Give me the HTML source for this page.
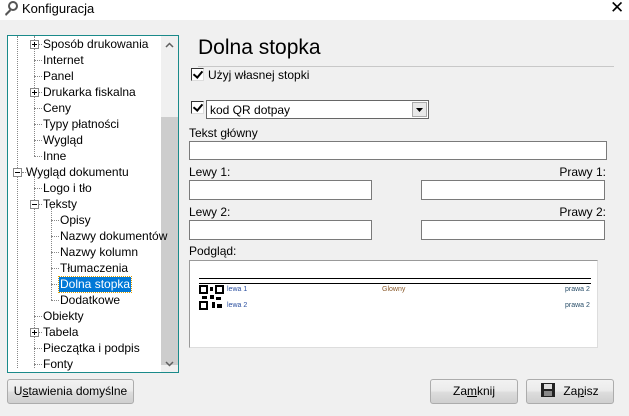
<!DOCTYPE html><html><head><style>
*{margin:0;padding:0;box-sizing:border-box}
body{width:629px;height:416px;background:#f0f0f0;font-family:"Liberation Sans",sans-serif;font-size:12px;color:#000;position:relative;overflow:hidden}
.a{position:absolute;white-space:nowrap}
.inp{position:absolute;background:#fff;border:1px solid #7a7a7a}
.cb{position:absolute;width:13px;height:13px;background:#fff;border:1px solid #333;border-right-color:#ddd;border-bottom-color:#ddd}
.cb:after{content:"";position:absolute;left:3px;top:0px;width:4px;height:7px;border:solid #000;border-width:0 2px 2px 0;transform:rotate(40deg)}
.pm{position:absolute;width:9px;height:9px;border:1px solid #888;background:#fff}
.pm:before{content:"";position:absolute;left:1px;top:3px;width:5px;height:1px;background:#000}
.pm.p:after{content:"";position:absolute;left:3px;top:1px;width:1px;height:5px;background:#000}
.btn{position:absolute;height:25px;border:1px solid #acacac;border-radius:3px;background:linear-gradient(#f2f2f2,#ebebeb 45%,#dcdcdc 55%,#cfcfcf);text-align:center;line-height:23px}
.dv{position:absolute;border-left:1px dotted #888}
.dh{position:absolute;border-top:1px dotted #888;height:0}
</style></head><body>
<div class="a" style="left:0;top:0;width:629px;height:20px;background:#fff"></div>
<svg class="a" style="left:3px;top:1px" width="16" height="16" viewBox="0 0 16 16"><circle cx="10" cy="5" r="4" fill="none" stroke="#555" stroke-width="2"/><path d="M7 8 L2 13 L3 15 L8 10" fill="#555"/></svg>
<div class="a" style="left:22px;top:1px;font-size:13px">Konfiguracja</div>
<div class="a" style="left:610px;top:-2px;font-size:17px">✕</div>

<div class="a" style="left:7px;top:35px;width:172px;height:338px;background:#fff;border:1px solid #1a8a8a"></div>
<div class="a" style="left:161px;top:36px;width:17px;height:336px;background:#f0f0f0"></div>
<div class="a" style="left:161px;top:117px;width:17px;height:248px;background:#cdcdcd"></div>
<svg class="a" style="left:165px;top:42px" width="9" height="6"><path d="M1 5 L4.5 1.5 L8 5" fill="none" stroke="#606060" stroke-width="1.5"/></svg>
<svg class="a" style="left:165px;top:361px" width="9" height="6"><path d="M1 1 L4.5 4.5 L8 1" fill="none" stroke="#606060" stroke-width="1.5"/></svg>

<div class="dv" style="left:17px;top:36px;height:136px"></div>
<div class="dv" style="left:34px;top:36px;height:120px"></div>
<div class="dv" style="left:17px;top:176px;height:192px"></div>
<div class="dv" style="left:34px;top:176px;height:192px"></div>
<div class="dv" style="left:51px;top:208px;height:92px"></div>
<div class="dh" style="left:34px;top:60px;width:8px"></div><div class="dh" style="left:34px;top:76px;width:8px"></div>
<div class="dh" style="left:34px;top:108px;width:8px"></div><div class="dh" style="left:34px;top:124px;width:8px"></div>
<div class="dh" style="left:34px;top:140px;width:8px"></div><div class="dh" style="left:34px;top:156px;width:8px"></div>
<div class="dh" style="left:34px;top:188px;width:8px"></div><div class="dh" style="left:34px;top:316px;width:8px"></div>
<div class="dh" style="left:34px;top:348px;width:8px"></div><div class="dh" style="left:34px;top:364px;width:8px"></div>
<div class="dh" style="left:22px;top:172px;width:4px"></div><div class="dh" style="left:39px;top:44px;width:3px"></div>
<div class="dh" style="left:39px;top:92px;width:3px"></div><div class="dh" style="left:39px;top:204px;width:3px"></div>
<div class="dh" style="left:39px;top:332px;width:3px"></div>
<div class="dh" style="left:51px;top:220px;width:8px"></div><div class="dh" style="left:51px;top:236px;width:8px"></div>
<div class="dh" style="left:51px;top:252px;width:8px"></div><div class="dh" style="left:51px;top:268px;width:8px"></div>
<div class="dh" style="left:51px;top:284px;width:8px"></div><div class="dh" style="left:51px;top:300px;width:8px"></div>
<div class="pm p" style="left:30px;top:40px"></div><div class="pm p" style="left:30px;top:88px"></div>
<div class="pm" style="left:13px;top:168px"></div><div class="pm" style="left:30px;top:200px"></div>
<div class="pm p" style="left:30px;top:328px"></div>
<div class="a" style="left:43px;top:37px">Sposób drukowania</div>
<div class="a" style="left:43px;top:53px">Internet</div>
<div class="a" style="left:43px;top:69px">Panel</div>
<div class="a" style="left:43px;top:85px">Drukarka fiskalna</div>
<div class="a" style="left:43px;top:101px">Ceny</div>
<div class="a" style="left:43px;top:117px">Typy płatności</div>
<div class="a" style="left:43px;top:133px">Wygląd</div>
<div class="a" style="left:43px;top:149px">Inne</div>
<div class="a" style="left:26px;top:165px">Wygląd dokumentu</div>
<div class="a" style="left:43px;top:181px">Logo i tło</div>
<div class="a" style="left:43px;top:197px">Teksty</div>
<div class="a" style="left:60px;top:213px">Opisy</div>
<div class="a" style="left:60px;top:229px">Nazwy dokumentów</div>
<div class="a" style="left:60px;top:245px">Nazwy kolumn</div>
<div class="a" style="left:60px;top:261px">Tłumaczenia</div>
<div class="a" style="left:59px;top:277px;background:#0078d7;color:#fff;padding:0 1px;height:15px;outline:1px dotted #e0a000">Dolna stopka</div>
<div class="a" style="left:60px;top:293px">Dodatkowe</div>
<div class="a" style="left:43px;top:309px">Obiekty</div>
<div class="a" style="left:43px;top:325px">Tabela</div>
<div class="a" style="left:43px;top:341px">Pieczątka i podpis</div>
<div class="a" style="left:43px;top:357px">Fonty</div>

<div class="a" style="left:198px;top:36px;font-size:21px">Dolna stopka</div>
<div class="a" style="left:198px;top:66px;width:416px;height:1px;background:#c8c8c8"></div>
<div class="cb" style="left:191px;top:68px"></div>
<div class="a" style="left:208px;top:68px">Użyj własnej stopki</div>
<div class="cb" style="left:191px;top:101px"></div>
<div class="inp" style="left:206px;top:100px;width:223px;height:19px;border-color:#666"><span class="a" style="left:3px;top:2px">kod QR dotpay</span>
<div class="a" style="left:205px;top:1px;width:15px;height:15px;background:#e8e8e8;border:1px solid #aaa"><svg class="a" style="left:3px;top:5px" width="8" height="5"><path d="M0 0 L7 0 L3.5 4 Z" fill="#000"/></svg></div></div>
<div class="a" style="left:189px;top:126px">Tekst główny</div>
<div class="inp" style="left:189px;top:141px;width:418px;height:19px"></div>
<div class="a" style="left:189px;top:165px">Lewy 1:</div>
<div class="a" style="right:23px;top:165px">Prawy 1:</div>
<div class="inp" style="left:189px;top:180px;width:183px;height:20px"></div>
<div class="inp" style="left:421px;top:180px;width:184px;height:20px"></div>
<div class="a" style="left:189px;top:205px">Lewy 2:</div>
<div class="a" style="right:23px;top:205px">Prawy 2:</div>
<div class="inp" style="left:189px;top:220px;width:183px;height:20px"></div>
<div class="inp" style="left:421px;top:220px;width:184px;height:20px"></div>
<div class="a" style="left:189px;top:244px">Podgląd:</div>
<div class="a" style="left:189px;top:260px;width:409px;height:88px;background:#fff;border:1px solid #999;border-right-color:#ddd;border-bottom-color:#ddd"></div>
<div class="a" style="left:199px;top:278px;width:392px;height:1px;background:#000"></div>
<div class="a" style="left:199px;top:283px;width:392px;height:1px;background:#000"></div>
<svg class="a" style="left:199px;top:285px" width="26" height="26" viewBox="0 0 26 26"><g fill="none" stroke="#000" stroke-width="2"><rect x="1" y="1" width="7" height="7"/><rect x="17" y="1" width="7" height="7"/><rect x="1" y="17" width="7" height="7"/></g><g fill="#000"><rect x="11" y="2" width="3" height="4"/><rect x="3" y="11" width="5" height="3"/><rect x="11" y="10" width="4" height="4"/><rect x="17" y="12" width="5" height="3"/><rect x="13" y="17" width="3" height="6"/><rect x="18" y="19" width="5" height="4"/></g></svg>
<div class="a" style="left:227px;top:286px;font-size:7px;color:#2a4fa0">lewa 1</div>
<div class="a" style="left:382px;top:286px;font-size:7px;color:#8a5a2a">Glowny</div>
<div class="a" style="left:565px;top:286px;font-size:7px;color:#2a4f6a">prawa 2</div>
<div class="a" style="left:227px;top:302px;font-size:7px;color:#2a4fa0">lewa 2</div>
<div class="a" style="left:565px;top:302px;font-size:7px;color:#2a4f6a">prawa 2</div>

<div class="btn" style="left:7px;top:379px;width:127px">U<u>s</u>tawienia domyślne</div>
<div class="btn" style="left:430px;top:379px;width:88px">Za<u>m</u>knij</div>
<div class="btn" style="left:526px;top:379px;width:88px"><svg style="vertical-align:-2px;margin-right:8px" width="14" height="14" viewBox="0 0 14 14"><rect x="0" y="0" width="14" height="14" fill="#222"/><rect x="3" y="1" width="8" height="5" fill="#ddd"/><rect x="3" y="8" width="8" height="5" fill="#888"/></svg>Za<u>p</u>isz</div>
</body></html>
